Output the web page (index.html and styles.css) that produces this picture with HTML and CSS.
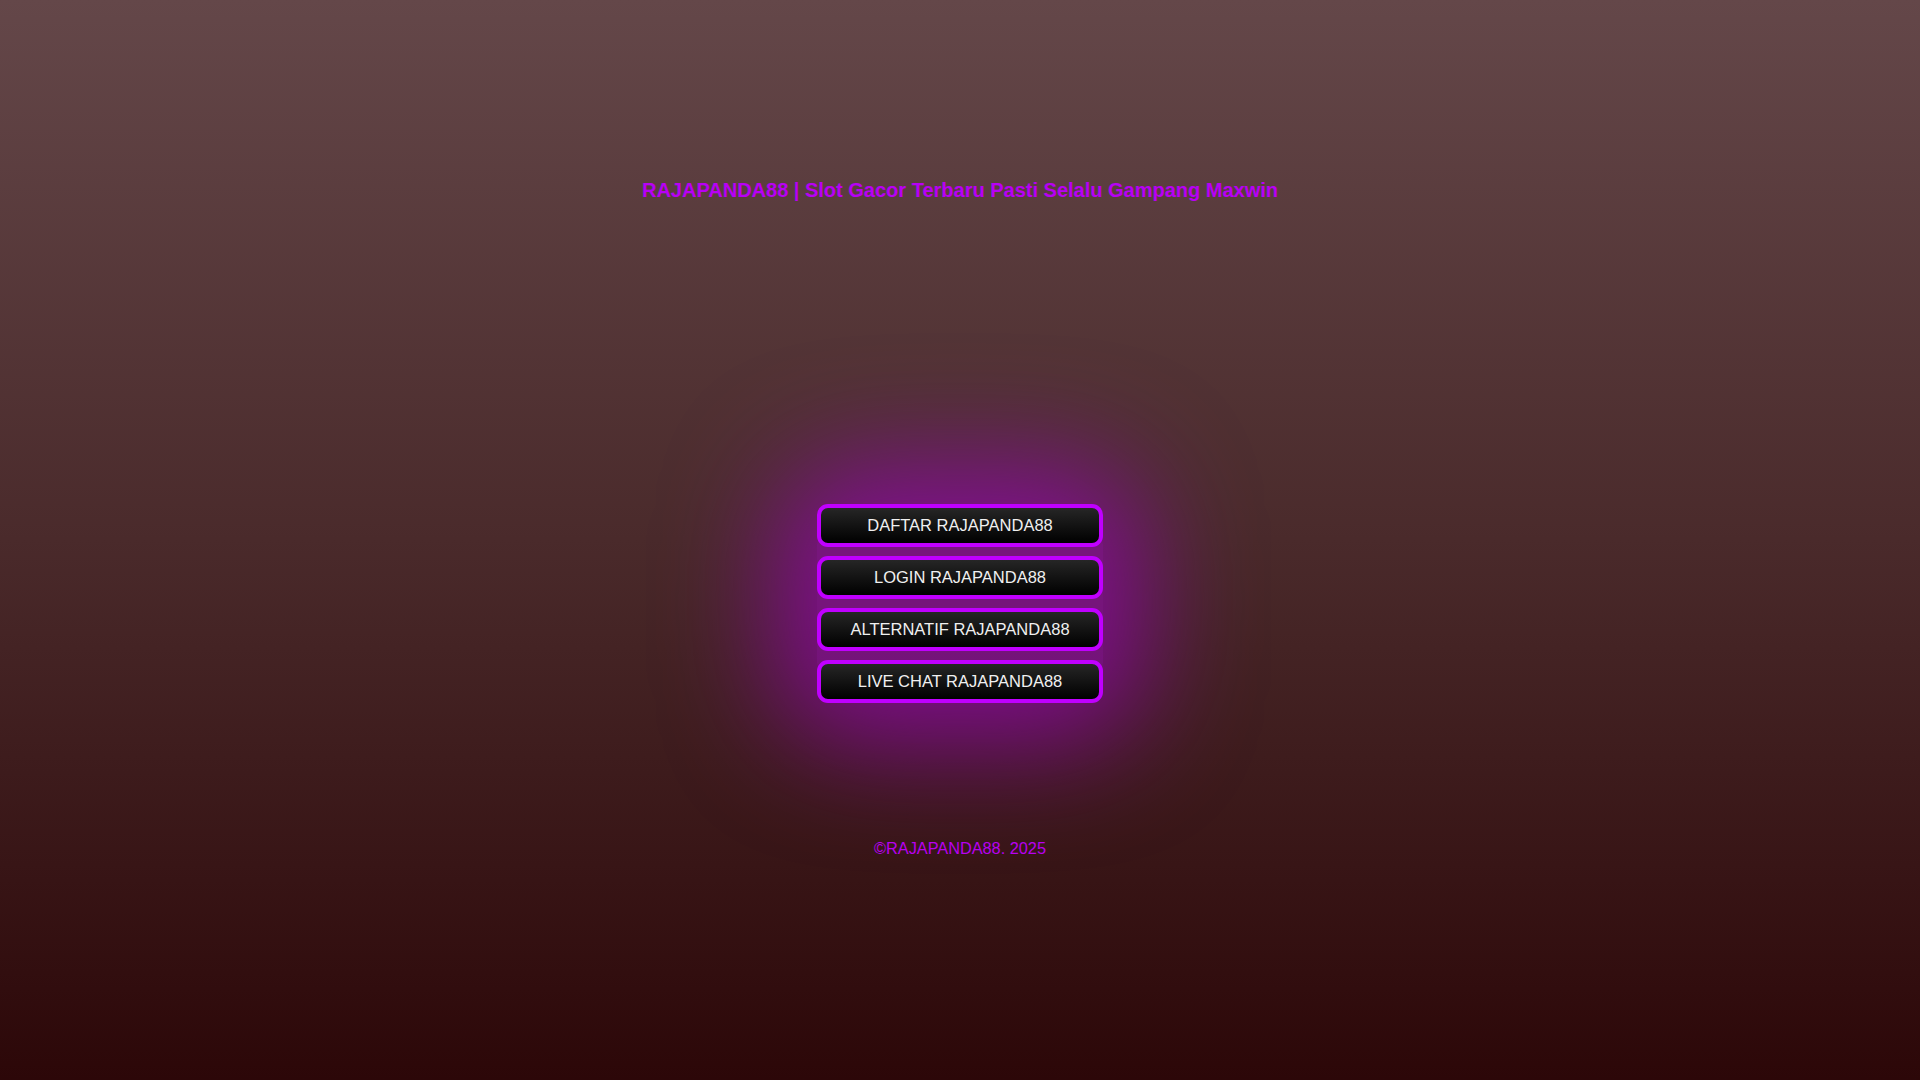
FILE: index.html
```html
<!DOCTYPE html>
<html lang="id">
<head>
<meta charset="utf-8">
<title>RAJAPANDA88 | Slot Gacor Terbaru Pasti Selalu Gampang Maxwin</title>
<link rel="stylesheet" href="styles.css">
</head>
<body>
<div class="page">
  <h1 class="title">RAJAPANDA88 | Slot Gacor Terbaru Pasti Selalu Gampang Maxwin</h1>
  <nav class="links">
    <a class="btn" href="#">DAFTAR RAJAPANDA88</a>
    <a class="btn" href="#">LOGIN RAJAPANDA88</a>
    <a class="btn" href="#">ALTERNATIF RAJAPANDA88</a>
    <a class="btn" href="#">LIVE CHAT RAJAPANDA88</a>
  </nav>
  <footer class="footer">©RAJAPANDA88. 2025</footer>
</div>
</body>
</html>
```
FILE: styles.css
```css
html, body {
  margin: 0;
  padding: 0;
  height: 100%;
}
body {
  background: linear-gradient(to bottom, #644749 0%, #4a2a2b 50%, #2c0708 100%);
  font-family: "Liberation Sans", Arial, sans-serif;
  min-height: 100vh;
}
.page {
  display: flex;
  flex-direction: column;
  align-items: center;
  padding-top: 178px;
}
.title {
  margin: 0;
  font-size: 20px;
  line-height: 24px;
  font-weight: bold;
  color: #b800f5;
}
.links {
  margin-top: 302px;
  display: flex;
  flex-direction: column;
  gap: 9px;
  width: 286px;
  border-radius: 40px;
  box-shadow: 0 0 110px 40px rgba(160, 0, 200, 0.65);
  background: rgba(150, 10, 180, 0.6);
}
.btn {
  display: flex;
  align-items: center;
  justify-content: center;
  height: 35px;
  border: 4px solid #c000ff;
  border-radius: 11px;
  background: linear-gradient(to bottom, #262626 0%, #000 100%);
  color: #f0f0f0;
  font-size: 16.5px;
  text-decoration: none;
}
.footer {
  margin-top: 135px;
  font-size: 16.3px;
  line-height: 20px;
  color: #b800f0;
}
```
